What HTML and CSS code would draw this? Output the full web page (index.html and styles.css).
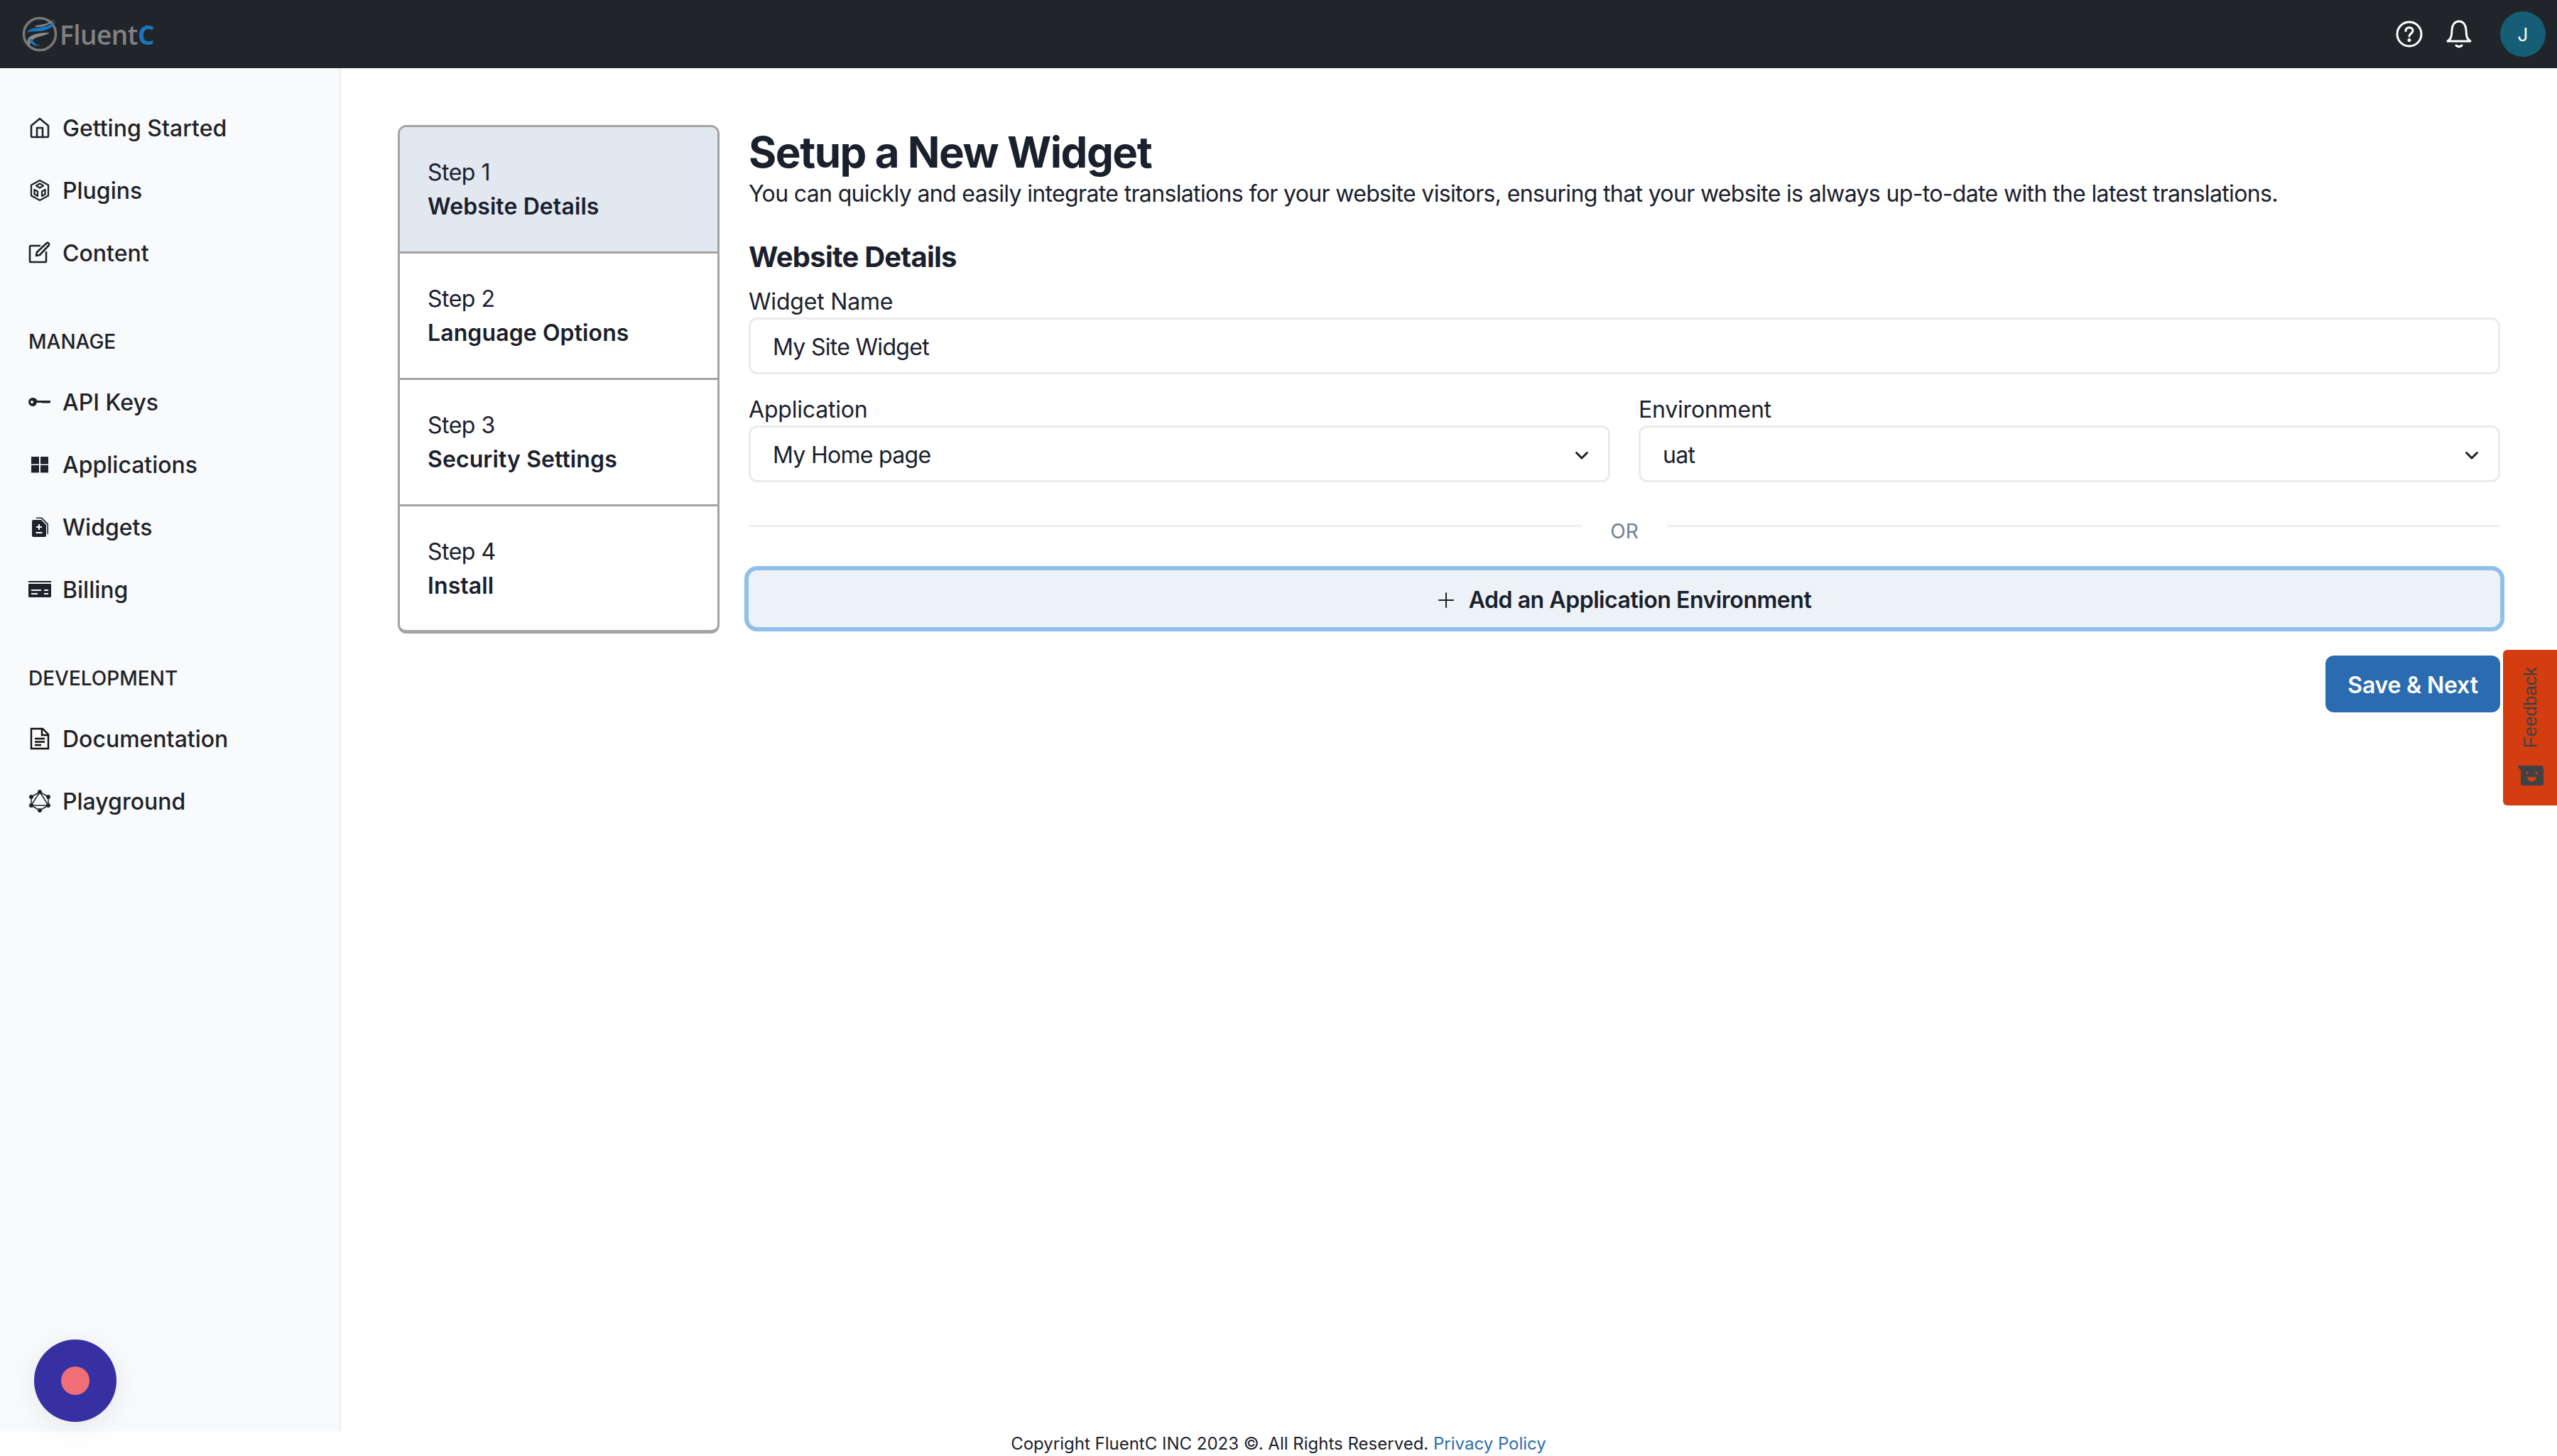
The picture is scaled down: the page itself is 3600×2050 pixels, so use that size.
FILE: index.html
```html
<!DOCTYPE html>
<html lang="en">
<head>
<meta charset="utf-8">
<title>Setup a New Widget</title>
<link rel="stylesheet" href="styles.css">
</head>
<body>
<div class="app">
  <header class="topbar">
    <div class="logo">
      <svg class="logo-mark" viewBox="0 0 52 52">
        <circle cx="26" cy="26" r="22.5" fill="none" stroke="#77787a" stroke-width="3.6"/>
        <path d="M20 14C30 13 39 11 47 5C41 13 31 16 20 16Z" fill="#8c8d8f"/>
        <path d="M8 24C12 16 22 18 30 16C38 14 44 12 48 8C47 14 40 19 32 21C24 23 14 21 8 24Z" fill="#1b75bb"/>
        <path d="M40 24C28 24 14 25 9 33C8 37 9 40 12 43C11 36 18 31 27 29C32 28 37 26 40 24Z" fill="#8c8d8f"/>
        <path d="M11 33C12 40 18 44 28 42C22 42 17 39 15 33Z" fill="#1b75bb"/>
      </svg>
      <span class="logo-text">Fluent<span class="logo-c">C</span></span>
    </div>
    <div class="top-actions">
      <svg class="top-icon" viewBox="0 0 40 40" fill="none" stroke="#fff" stroke-width="3" stroke-linecap="round" stroke-linejoin="round">
        <circle cx="20" cy="20" r="17"/>
        <path d="M15 15.500c0-3 2.200-4.800 5-4.800s5 1.800 5 4.500c0 3.800-5 4.200-5 7.800"/>
        <circle cx="20" cy="28.500" r="1" fill="#fff"/>
      </svg>
      <svg class="top-icon" viewBox="0 0 40 40" fill="none" stroke="#fff" stroke-width="3" stroke-linecap="round" stroke-linejoin="round">
        <path d="M4 30c3-2 5-4 5.500-9l.5-7C10.500 7 14 2 20 2s9.500 5 10 12l.5 7c.5 5 2.500 7 5.500 9Z"/>
        <path d="M16 36c2.500 2 5.500 2 8 0"/>
      </svg>
      <div class="avatar">J</div>
    </div>
  </header>

  <div class="middle">
    <nav class="sidebar">
      <div class="nav-group">
        <a class="nav-item">
          <svg class="nav-icon" viewBox="0 0 32 32" fill="none" stroke="#1f2329" stroke-width="2.600" stroke-linejoin="round" stroke-linecap="round"><path d="M4 13 16 3l12 10v15a2 2 0 0 1-1 1H5a2 2 0 0 1-1-1Z"/><path d="M12 29V16h8v13"/></svg>
          <span>Getting Started</span>
        </a>
        <a class="nav-item">
          <svg class="nav-icon" viewBox="0 0 32 32" fill="none" stroke="#1f2329" stroke-width="2.300" stroke-linejoin="round" stroke-linecap="round"><path d="M16 2 28 8.500v15L16 30 4 23.500v-15Z"/><path d="m16 6.500 5 3-5 3-5-3Z"/><path d="m8.500 15 4.500 2.500v6.500l-4.500-2.500ZM23.500 15 19 17.500v6.500l4.500-2.500Z"/></svg>
          <span>Plugins</span>
        </a>
        <a class="nav-item">
          <svg class="nav-icon" viewBox="0 0 32 32" fill="none" stroke="#1f2329" stroke-width="2.600" stroke-linejoin="round" stroke-linecap="round"><path d="M16 6H3a1.500 1.500 0 0 0-1 1v21a1 1 0 0 0 1 1h21a1 1 0 0 0 1-1V15"/><path d="M12 15 26 2c1.500-1 3.500 1 3 3L16 19l-5 1Z"/></svg>
          <span>Content</span>
        </a>
      </div>

      <div class="nav-group">
        <div class="nav-label">Manage</div>
        <a class="nav-item">
          <svg class="nav-icon" viewBox="0 0 32 32" fill="#1f2329"><path fill-rule="evenodd" d="M6 10c3 0 5.500 1.500 6.500 4H31v2.500L29.500 18 28 17l-1.500 1-1.500-1-1.500 1-1.500-1-1.500 1-1.500-1h-7.500C11.500 20.500 9 22 6 22a6 6 0 0 1 0-12Zm-1 4a2 2 0 1 0 0 4 2 2 0 0 0 0-4Z"/></svg>
          <span>API Keys</span>
        </a>
        <a class="nav-item">
          <svg class="nav-icon" viewBox="0 0 32 32" fill="#1f2329"><rect x="4" y="5" width="11" height="10.500"/><rect x="17" y="5" width="11" height="10.500"/><rect x="4" y="17" width="11" height="10.500"/><rect x="17" y="17" width="11" height="10.500"/></svg>
          <span>Applications</span>
        </a>
        <a class="nav-item">
          <svg class="nav-icon" viewBox="0 0 32 32" fill="#1f2329"><path d="M7 6h11l7 7v15a2 2 0 0 1-2 2H7a2 2 0 0 1-2-2V8a2 2 0 0 1 2-2Z"/><path d="M11 2.500h8l9 9V26h-1.500V12.500L18 4h-7Z"/><path d="M14 12h2v3h3v2h-3v3h-2v-3h-3v-2h3ZM10.500 23h9v2h-9Z" fill="#f9fafc"/></svg>
          <span>Widgets</span>
        </a>
        <a class="nav-item">
          <svg class="nav-icon" viewBox="0 0 32 32" fill="#1f2329"><rect x="0" y="4" width="32" height="2"/><path fill-rule="evenodd" d="M1 8h30a1 1 0 0 1 1 1v17a1 1 0 0 1-1 1H1a1 1 0 0 1-1-1V9a1 1 0 0 1 1-1Zm3 8v2h14v-2Zm18 0v2h6v-2ZM4 21v2h9v-2Zm18 0v2h6v-2Z"/></svg>
          <span>Billing</span>
        </a>
      </div>

      <div class="nav-group">
        <div class="nav-label">Development</div>
        <a class="nav-item">
          <svg class="nav-icon" viewBox="0 0 32 32" fill="none" stroke="#111" stroke-width="2.400"><path d="M4 2h16l8 8v20H4Z"/><path d="M19 2v9h9M9 16h14M9 20.500h14M9 25h9"/></svg>
          <span>Documentation</span>
        </a>
        <a class="nav-item">
          <svg class="nav-icon" viewBox="0 0 32 32" fill="#1f2329" stroke="#1f2329" stroke-width="1.500" stroke-linejoin="round"><path d="M16 3 28 10v12L16 29 4 22V10Z" fill="none"/><path d="M16 3 28 22H4Z" fill="none"/><circle cx="16" cy="3" r="2.200"/><circle cx="28" cy="10" r="2.200"/><circle cx="28" cy="22" r="2.200"/><circle cx="16" cy="29" r="2.200"/><circle cx="4" cy="22" r="2.200"/><circle cx="4" cy="10" r="2.200"/></svg>
          <span>Playground</span>
        </a>
      </div>
    </nav>

    <main class="main">
      <ol class="steps">
        <li class="step step-active"><span class="step-num">Step 1</span><strong class="step-name">Website Details</strong></li>
        <li class="step"><span class="step-num">Step 2</span><strong class="step-name">Language Options</strong></li>
        <li class="step"><span class="step-num">Step 3</span><strong class="step-name">Security Settings</strong></li>
        <li class="step"><span class="step-num">Step 4</span><strong class="step-name">Install</strong></li>
      </ol>

      <section class="content">
        <h1 class="title">Setup a New Widget</h1>
        <p class="lead">You can quickly and easily integrate translations for your website visitors, ensuring that your website is always up-to-date with the latest translations.</p>
        <h2 class="subtitle">Website Details</h2>

        <div class="field">
          <div class="field-label">Widget Name</div>
          <div class="control">My Site Widget</div>
        </div>

        <div class="field-row">
          <div class="field">
            <div class="field-label">Application</div>
            <div class="control">
              <span>My Home page</span>
              <svg class="chevron" viewBox="0 0 24 24" fill="none" stroke="#1a202c" stroke-width="3" stroke-linecap="round" stroke-linejoin="round"><path d="m4.500 8.500 7.500 7.500 7.500-7.500"/></svg>
            </div>
          </div>
          <div class="field">
            <div class="field-label">Environment</div>
            <div class="control">
              <span>uat</span>
              <svg class="chevron" viewBox="0 0 24 24" fill="none" stroke="#1a202c" stroke-width="3" stroke-linecap="round" stroke-linejoin="round"><path d="m4.500 8.500 7.500 7.500 7.500-7.500"/></svg>
            </div>
          </div>
        </div>

        <div class="or-row">
          <span class="or-line"></span>
          <span class="or-text">OR</span>
          <span class="or-line"></span>
        </div>

        <button class="add-btn">
          <svg class="plus" viewBox="0 0 24 24" fill="none" stroke="#1a202c" stroke-width="2" stroke-linecap="round"><path d="M12 2v20M2 12h20"/></svg>
          <span>Add an Application Environment</span>
        </button>

        <div class="form-actions">
          <button class="save-btn">Save &amp; Next</button>
        </div>
      </section>
    </main>
  </div>

  <footer class="footer">Copyright FluentC INC 2023 ©. All Rights Reserved. <a class="footer-link">Privacy Policy</a></footer>
</div>

<div class="feedback">
  <span class="feedback-text">Feedback</span>
  <svg class="feedback-icon" viewBox="0 0 38 30"><path d="M0 1h33a4 4 0 0 1 4 4v21a3 3 0 0 1-3 3H8a3 3 0 0 1-3-3V8Z" fill="#3e4145"/><circle cx="14" cy="11" r="1.800" fill="#d33d10"/><circle cx="27" cy="11" r="1.800" fill="#d33d10"/><path d="M14 17h13a6.500 6.500 0 0 1-13 0Z" fill="#d33d10"/></svg>
</div>

<div class="recorder"><span class="recorder-dot"></span></div>
</body>
</html>
```

FILE: styles.css
```css
* { box-sizing: border-box; }
html, body { margin: 0; padding: 0; height: 100%; }
body {
  font-family: Inter, "Liberation Sans", sans-serif;
  font-size: 32px;
  color: #1a202c;
  background: #fff;
  overflow: hidden;
}
.app { height: 2050px; display: flex; flex-direction: column; }

.topbar {
  height: 96px;
  flex: none;
  background: #212529;
  display: flex;
  align-items: center;
  justify-content: space-between;
  padding: 0 16px 0 30px;
}
.logo { display: flex; align-items: center; gap: 2px; }
.logo-mark { width: 52px; height: 52px; }
.logo-text {
  font-family: "Open Sans", sans-serif;
  font-weight: 600;
  font-size: 37px;
  letter-spacing: -0.5px;
  color: #808183;
}
.logo-c { color: #1b75bb; font-weight: 700; }
.top-actions { display: flex; align-items: center; }
.top-icon { width: 40px; height: 40px; margin-right: 30px; }
.top-icon + .top-icon { margin-right: 38px; }
.avatar {
  width: 64px;
  height: 64px;
  border-radius: 50%;
  background: #155e75;
  color: #fff;
  font-size: 26px;
  display: flex;
  align-items: center;
  justify-content: center;
}

.middle { flex: 1; display: flex; min-height: 0; }
.sidebar {
  width: 480px;
  flex: none;
  background: #f9fafc;
  border-right: 3px solid #eff1f7;
  padding: 40px 0 0 40px;
  display: flex;
  flex-direction: column;
  gap: 40px;
}
.nav-group { display: flex; flex-direction: column; }
.nav-item {
  height: 88px;
  display: flex;
  align-items: center;
  gap: 16px;
  font-weight: 500;
  color: #1f2329;
}
.nav-icon { width: 32px; height: 32px; flex: none; }
.nav-label {
  height: 56px;
  margin: 13px 0;
  display: flex;
  align-items: center;
  font-size: 28px;
  font-weight: 500;
  text-transform: uppercase;
  color: #1f2329;
}

.main {
  flex: 1;
  min-width: 0;
  padding: 80px 80px 0 80px;
  display: flex;
  align-items: flex-start;
  gap: 41px;
}
.steps {
  width: 453px;
  flex: none;
  margin: 0;
  padding: 0;
  list-style: none;
  border: 3px solid #a3a3a3;
  border-bottom-width: 5px;
  border-radius: 12px;
  overflow: hidden;
}
.step {
  height: 178px;
  padding: 40px 0 0 39px;
  display: flex;
  flex-direction: column;
  gap: 0;
  line-height: 48px;
  border-bottom: 3px solid #a3a3a3;
}
.step:last-child { border-bottom: 0; height: 174px; }
.step-active { background: #e2e8f0; }
.step-num { letter-spacing: -0.5px; }
.step-name { font-weight: 600; letter-spacing: 0.1px; }

.content { flex: 1; min-width: 0; }
.title { margin: 2px 0 0; font-size: 60px; line-height: 72px; font-weight: 700; letter-spacing: -1.45px; }
.lead { margin: -1px 0 0; line-height: 48px; height: 48px; white-space: nowrap; letter-spacing: -0.65px; }
.subtitle { margin: 41px 0 13px; font-size: 40px; line-height: 48px; font-weight: 700; letter-spacing: -0.77px; }
.field { flex: 1; min-width: 0; }
.field-label { height: 48px; line-height: 52px; letter-spacing: -0.2px; }
.control {
  height: 80px;
  border: 3px solid #e9ebef;
  border-radius: 12px;
  padding: 3px 29px 0 31px;
  display: flex;
  align-items: center;
  justify-content: space-between;
  background: #fff;
  letter-spacing: -0.7px;
}
.chevron { width: 24px; height: 24px; margin-right: -4px; }
.field-row { display: flex; gap: 40px; margin-top: 24px; }
.or-row { display: flex; align-items: flex-start; margin-top: 60px; height: 64px; }
.or-line { flex: 1; height: 3px; background: #edeff2; }
.or-text { width: 120px; text-align: center; font-size: 28px; color: #718096; line-height: 34px; margin-top: -9px; padding-top: 1px; }
.add-btn {
  width: 100%;
  height: 80px;
  padding: 3px 0 0;
  display: flex;
  align-items: center;
  justify-content: center;
  gap: 20px;
  background: #edf2f7;
  border: 0;
  border-radius: 12px;
  box-shadow: 0 0 0 6px #90bfe9;
  font: 600 32px Inter, sans-serif;
  letter-spacing: -0.45px;
  color: #1a202c;
}
.plus { width: 24px; height: 24px; }
.form-actions { display: flex; justify-content: flex-end; margin-top: 40px; }
.save-btn {
  height: 80px;
  width: 246px;
  padding: 3px 0 0;
  background: #2b6cb0;
  color: #fff;
  border: 0;
  border-radius: 12px;
  font: 600 32px Inter, sans-serif;
  letter-spacing: -0.2px;
}

.footer {
  height: 35px;
  flex: none;
  text-align: center;
  font-size: 24px;
  line-height: 36px;
  color: #1a202c;
}
.footer-link { color: #2b6cb0; }

.feedback {
  position: absolute;
  left: 3524px;
  top: 915px;
  width: 76px;
  height: 219px;
  background: #d33d10;
  border-radius: 6px 0 0 6px;
  display: flex;
  flex-direction: column;
  align-items: center;
  padding-top: 24px;
}
.feedback-text {
  writing-mode: vertical-rl;
  transform: rotate(180deg);
  font-family: "Liberation Sans", sans-serif;
  font-size: 26px;
  line-height: 30px;
  color: #3e4145;
}
.feedback-icon { width: 38px; height: 30px; margin-top: 24px; margin-left: 2px; }

.recorder {
  position: absolute;
  left: 48px;
  top: 1886px;
  width: 116px;
  height: 116px;
  border-radius: 50%;
  background: #3730a3;
  box-shadow: 0 8px 40px rgba(0, 0, 0, 0.08);
  display: flex;
  align-items: center;
  justify-content: center;
}
.recorder-dot { width: 40px; height: 40px; border-radius: 50%; background: #f06e75; }
```
